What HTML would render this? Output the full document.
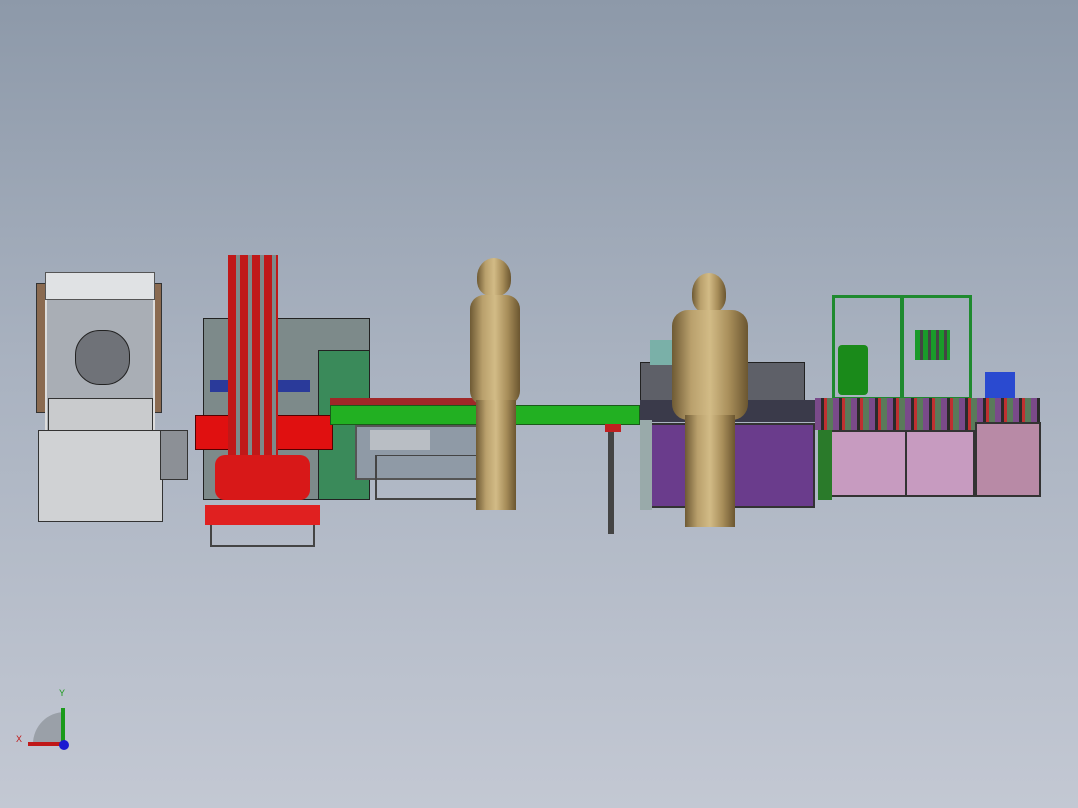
<!DOCTYPE html>
<html><head><meta charset="utf-8"><style>
body{margin:0;width:1078px;height:808px;overflow:hidden;background:linear-gradient(#8d99a9 0%,#a9b2c0 45%,#c3c8d3 100%);position:relative;font-family:"Liberation Sans",sans-serif}
div{position:absolute;box-sizing:border-box}
.gold{background:linear-gradient(90deg,#6e5a34,#b9a06c,#d2bb86,#a88e5a,#6b5630)}
</style></head><body>
<!-- left machine -->
<div style="left:36px;top:283px;width:12px;height:130px;background:#8a6a50;border:1px solid #333"></div>
<div style="left:150px;top:283px;width:12px;height:130px;background:#8a6a50;border:1px solid #333"></div>
<div style="left:45px;top:272px;width:110px;height:160px;border:2px solid #ddd;background:#a9aeb5"></div>
<div style="left:45px;top:272px;width:110px;height:28px;background:#e0e2e4;border:1px solid #555"></div>
<div style="left:75px;top:330px;width:55px;height:55px;border-radius:45%;background:#6f7278;border:1px solid #222"></div>
<div style="left:48px;top:398px;width:105px;height:40px;background:#c9cbcd;border:1px solid #333"></div>
<div style="left:38px;top:430px;width:125px;height:92px;background:#d0d2d4;border:1px solid #333"></div>
<div style="left:160px;top:430px;width:28px;height:50px;background:#8c9096;border:1px solid #333"></div>
<!-- robot area machine -->
<div style="left:203px;top:318px;width:167px;height:182px;background:#7d8a8a;border:1px solid #222"></div>
<div style="left:210px;top:380px;width:100px;height:12px;background:#2a3a9a"></div>
<div style="left:318px;top:350px;width:52px;height:150px;background:#3a8a5a;border:1px solid #222"></div>
<div style="left:195px;top:415px;width:138px;height:35px;background:#e01010;border:1px solid #500"></div>
<div style="left:228px;top:255px;width:50px;height:200px;background:repeating-linear-gradient(90deg,#c01818 0 8px,#7d8a8a 8px 12px)"></div>
<div style="left:215px;top:455px;width:95px;height:45px;background:#d81818;border-radius:10px"></div>
<div style="left:205px;top:505px;width:115px;height:20px;background:#e02020"></div>
<div style="left:210px;top:525px;width:105px;height:22px;border:2px solid #444;border-top:none"></div>
<!-- conveyor -->
<div style="left:330px;top:398px;width:150px;height:8px;background:#a02828"></div>
<div style="left:330px;top:405px;width:310px;height:20px;background:#22b022;border:1px solid #1a5a1a"></div>
<div style="left:355px;top:425px;width:150px;height:55px;border:2px solid #555;background:#8f9aa6"></div>
<div style="left:370px;top:430px;width:60px;height:20px;background:#b9bec4"></div>
<div style="left:375px;top:455px;width:125px;height:45px;border:2px solid #444;border-top:1px solid #444"></div>
<div style="left:608px;top:424px;width:6px;height:110px;background:#444"></div>
<div style="left:605px;top:424px;width:16px;height:8px;background:#c02020"></div>
<!-- person 1 -->
<div style="left:477px;top:258px;width:34px;height:38px;border-radius:50% 50% 40% 40%" class="gold"></div>
<div style="left:470px;top:295px;width:50px;height:110px;border-radius:14px" class="gold"></div>
<div style="left:476px;top:400px;width:40px;height:110px" class="gold"></div>
<!-- purple cabinet + person 2 -->
<div style="left:640px;top:362px;width:165px;height:45px;background:#5e6068;border:1px solid #222"></div>
<div style="left:650px;top:340px;width:25px;height:25px;background:#7ab0a8"></div>
<div style="left:640px;top:400px;width:180px;height:22px;background:#3a3a4a"></div>
<div style="left:650px;top:423px;width:165px;height:85px;background:#6a3c8c;border:2px solid #333"></div>
<div style="left:640px;top:420px;width:12px;height:90px;background:#9aa"></div>
<div style="left:692px;top:273px;width:34px;height:40px;border-radius:50% 50% 40% 40%" class="gold"></div>
<div style="left:672px;top:310px;width:76px;height:110px;border-radius:16px" class="gold"></div>
<div style="left:685px;top:415px;width:50px;height:112px" class="gold"></div>
<!-- right machine -->
<div style="left:832px;top:295px;width:140px;height:105px;border:3px solid #1f8a2f"></div>
<div style="left:900px;top:295px;width:4px;height:105px;background:#1f8a2f"></div>
<div style="left:838px;top:345px;width:30px;height:50px;background:#1a8a1a;border-radius:4px"></div>
<div style="left:915px;top:330px;width:35px;height:30px;background:repeating-linear-gradient(90deg,#1a9a2a 0 5px,#444 5px 8px)"></div>
<div style="left:985px;top:372px;width:30px;height:30px;background:#2a4ad0"></div>
<div style="left:815px;top:398px;width:225px;height:32px;background:repeating-linear-gradient(90deg,#7a4a8a 0 6px,#2a2a2a 6px 9px,#c03030 9px 12px,#5a7a5a 12px 18px)"></div>
<div style="left:830px;top:430px;width:145px;height:67px;background:#c79bc0;border:2px solid #333"></div>
<div style="left:905px;top:430px;width:2px;height:67px;background:#333"></div>
<div style="left:975px;top:422px;width:66px;height:75px;background:#b88aa6;border:2px solid #333"></div>
<div style="left:818px;top:430px;width:14px;height:70px;background:#2a7a2a"></div>
<!-- axis triad -->
<div style="left:33px;top:712px;width:32px;height:32px;background:#9aa0a8;border-radius:32px 0 0 0"></div>
<div style="left:61px;top:708px;width:4px;height:38px;background:#1a9a1a"></div>
<div style="left:28px;top:742px;width:36px;height:4px;background:#c01818"></div>
<div style="left:59px;top:740px;width:10px;height:10px;background:#1a1ad0;border-radius:50%"></div>
<div style="left:59px;top:688px;font-size:9px;color:#1a9a1a">Y</div>
<div style="left:16px;top:734px;font-size:9px;color:#c01818">X</div>
</body></html>
